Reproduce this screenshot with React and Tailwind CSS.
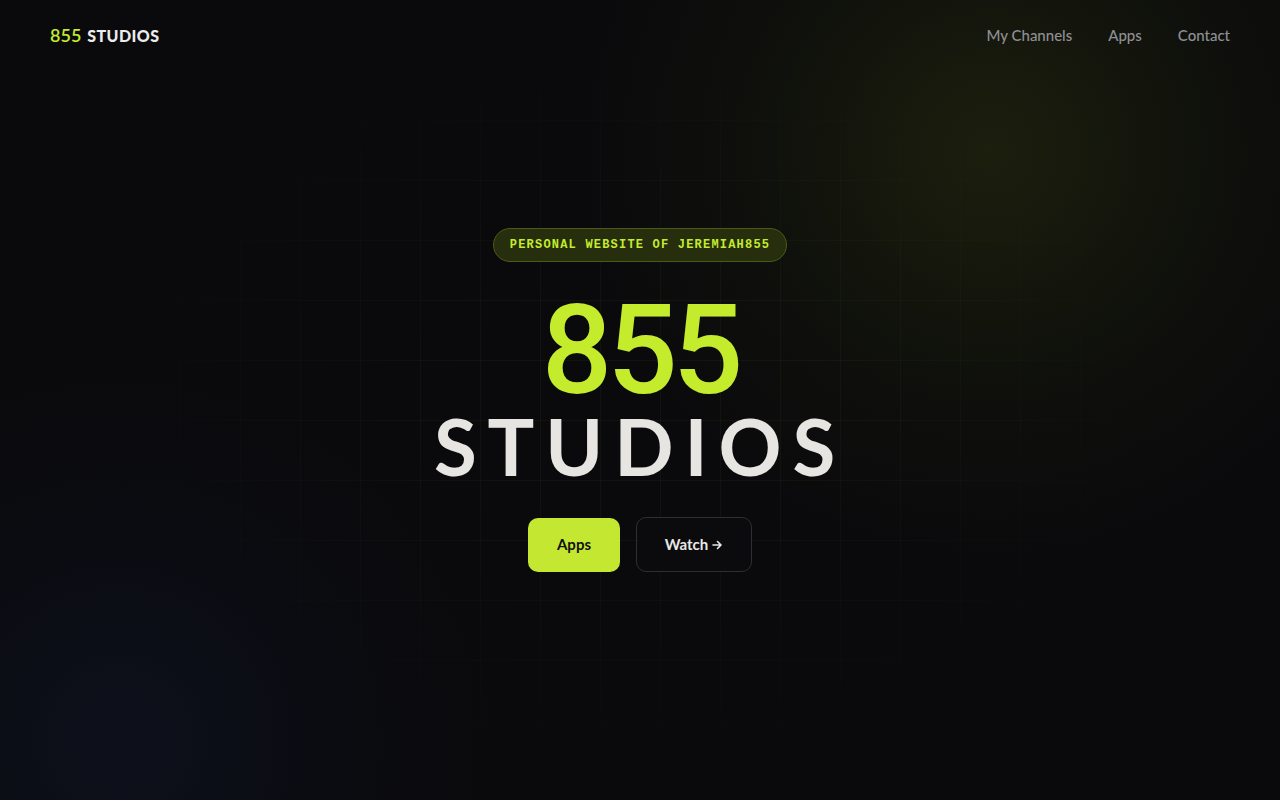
import React from "react";

export default function App() {
  return (
    <div className="relative h-[800px] w-[1280px] overflow-hidden bg-[#0a0a0c] font-['Lato',sans-serif]">
      {/* glows */}
      <div className="pointer-events-none absolute -right-[120px] -top-[260px] h-[820px] w-[820px] rounded-full bg-[radial-gradient(circle,rgba(120,140,20,0.16)_0%,rgba(80,100,10,0.07)_40%,rgba(0,0,0,0)_70%)]" />
      <div className="pointer-events-none absolute -bottom-[320px] -left-[260px] h-[760px] w-[760px] rounded-full bg-[radial-gradient(circle,rgba(30,50,110,0.16)_0%,rgba(20,30,80,0.06)_45%,rgba(0,0,0,0)_70%)]" />
      {/* grid */}
      <div className="pointer-events-none absolute inset-0 bg-[linear-gradient(rgba(190,230,60,0.045)_1px,transparent_1px),linear-gradient(90deg,rgba(190,230,60,0.045)_1px,transparent_1px)] bg-[size:60px_60px] [mask-image:radial-gradient(ellipse_560px_380px_at_640px_400px,black_30%,transparent_100%)]" />

      <div className="relative flex h-full flex-col">
        <header className="flex items-center justify-between px-[50px] pt-[23px]">
          <div className="flex items-baseline gap-[6px] text-[18px] leading-[24px]">
            <span className="font-semibold text-[#c4ec2d]">855</span>
            <span className="font-black tracking-wide text-[#ececec] text-[16px]">STUDIOS</span>
          </div>
          <nav className="flex items-center gap-[36px] text-[15px] font-medium text-[#8f8f94]">
            <span>My Channels</span>
            <span>Apps</span>
            <span>Contact</span>
          </nav>
        </header>

        <main className="flex flex-col items-center pt-[180px]">
          <div className="rounded-full border border-[#4b5a16] bg-[#262e0e] px-[16px] py-[8px] font-['Liberation_Mono',monospace] text-[12px] font-bold leading-[16px] tracking-[0.1em] text-[#c4ec2d]">
            PERSONAL WEBSITE OF JEREMIAH855
          </div>
          <h1 className="mt-[36px] flex flex-col items-center">
            <span className="font-['Roboto',sans-serif] text-[124px] font-medium leading-[106px] tracking-[-0.04em] text-[#c4ec2d]">
              855
            </span>
            <span className="text-[78px] font-bold leading-[84px] tracking-[0.14em] text-[#e6e5e2]">
              STUDIOS
            </span>
          </h1>
          <div className="mt-[29px] flex items-center gap-[16px]">
            <button className="h-[54px] w-[92px] rounded-[10px] bg-[#c4e832] text-[15px] font-bold text-[#111]">
              Apps
            </button>
            <button className="flex h-[55px] w-[116px] items-center justify-center gap-[3px] rounded-[10px] border border-[#2e2e33] bg-[#0b0b0d] text-[15px] font-bold text-[#e8e8e8]">
              Watch
              <svg width="12" height="12" viewBox="0 0 24 24" fill="none" stroke="currentColor" strokeWidth="3.2" strokeLinecap="round" strokeLinejoin="round">
                <path d="M4 12h15M13 5l7 7-7 7" />
              </svg>
            </button>
          </div>
        </main>
      </div>
    </div>
  );
}
